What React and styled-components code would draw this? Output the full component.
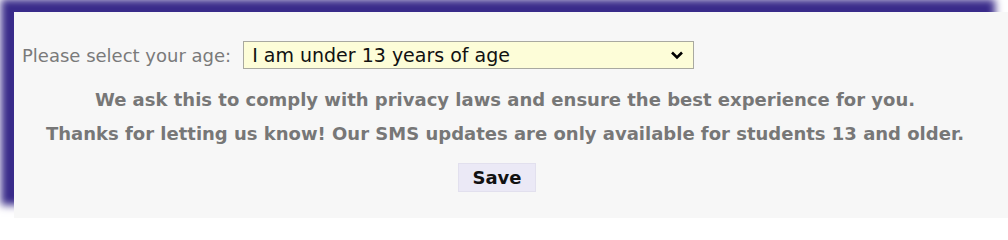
import React, { useState } from 'react';
import styled, { createGlobalStyle } from 'styled-components';

const GlobalStyle = createGlobalStyle`
  html, body {
    margin: 0;
    padding: 0;
    background: #ffffff;
    overflow: hidden;
  }
  body {
    font-family: "DejaVu Sans", Verdana, sans-serif;
  }
`;

const Page = styled.div`
  width: 1008px;
  height: 218px;
  padding: 12px 0 0 14px;
  box-sizing: border-box;
  overflow: hidden;
`;

const Panel = styled.div`
  width: 994px;
  height: 206px;
  box-sizing: border-box;
  background: #f7f7f7;
  box-shadow: -13px -13px 8px #392b8a;
  padding: 29px 20px 0 8px;
  display: flex;
  flex-direction: column;
`;

const AgeRow = styled.div`
  display: flex;
  align-items: center;
  gap: 12px;
`;

const Label = styled.label`
  font-size: 18px;
  color: #7a7a7a;
`;

const SelectWrap = styled.div`
  position: relative;
  width: 451px;
  height: 28px;
`;

const Select = styled.select`
  appearance: none;
  width: 100%;
  height: 100%;
  box-sizing: border-box;
  border: 1px solid #a9a9a0;
  background: #fdfdd8;
  color: #111;
  font-family: "DejaVu Sans", Verdana, sans-serif;
  font-size: 19px;
  padding: 0 0 0 8px;
  outline: none;
`;

const Chevron = styled.svg`
  position: absolute;
  right: 10px;
  top: 9px;
  width: 14px;
  height: 10px;
  pointer-events: none;
`;

const Note = styled.p`
  margin: ${({ top }) => top}px 0 0;
  text-align: center;
  font-size: 18px;
  line-height: 21px;
  font-weight: bold;
  color: #777777;
`;

const SaveButton = styled.button`
  align-self: center;
  margin: 19px 0 0 -16px;
  height: 29px;
  padding: 0 13px;
  border: 1px solid #e2e0ee;
  background: #ebe9f6;
  font-family: "DejaVu Sans", Verdana, sans-serif;
  font-size: 18px;
  font-weight: bold;
  color: #111;
`;

export default function App() {
  const [age, setAge] = useState('under');

  return (
    <>
      <GlobalStyle />
      <Page>
        <Panel>
          <AgeRow>
            <Label htmlFor="age">Please select your age:</Label>
            <SelectWrap>
              <Select id="age" value={age} onChange={(e) => setAge(e.target.value)}>
                <option value="under">I am under 13 years of age</option>
                <option value="over">I am 13 years of age or older</option>
              </Select>
              <Chevron viewBox="0 0 14 10">
                <path d="M2 2.5l5 5 5-5" fill="none" stroke="#000" strokeWidth="2.6" />
              </Chevron>
            </SelectWrap>
          </AgeRow>
          <Note top={20}>
            We ask this to comply with privacy laws and ensure the best experience for you.
          </Note>
          <Note top={13}>
            Thanks for letting us know! Our SMS updates are only available for students 13 and older.
          </Note>
          <SaveButton>Save</SaveButton>
        </Panel>
      </Page>
    </>
  );
}
